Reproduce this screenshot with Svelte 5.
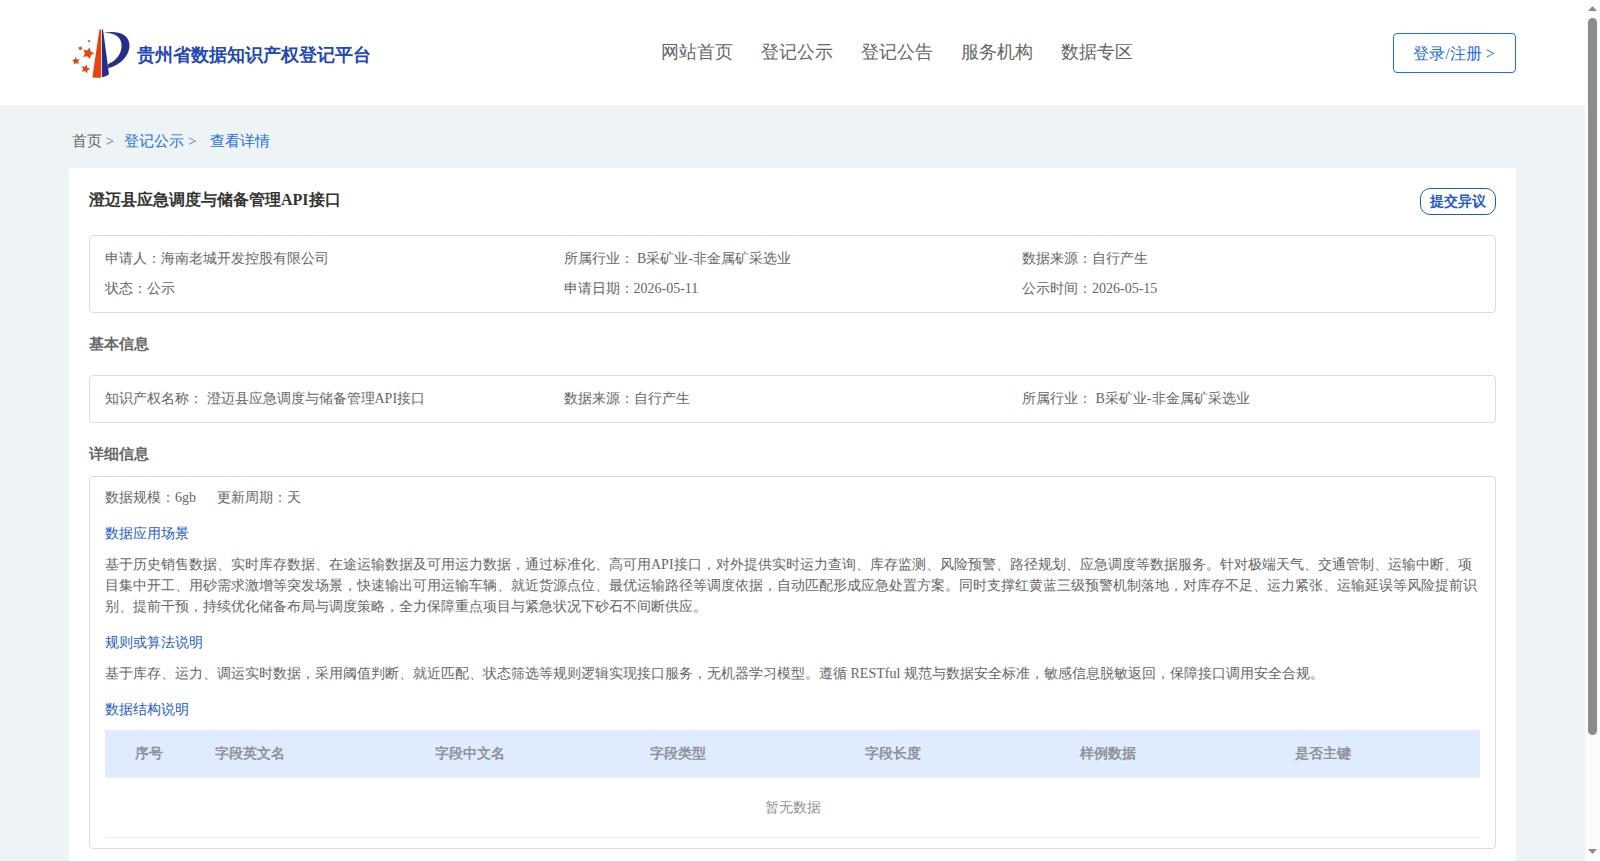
<script>
	const menus = ['网站首页', '登记公示', '登记公告', '服务机构', '数据专区']

	const summary = [
		'申请人：海南老城开发控股有限公司',
		'所属行业： B采矿业-非金属矿采选业',
		'数据来源：自行产生',
		'状态：公示',
		'申请日期：2026-05-11',
		'公示时间：2026-05-15'
	]

	const basic = [
		'知识产权名称： 澄迈县应急调度与储备管理API接口',
		'数据来源：自行产生',
		'所属行业： B采矿业-非金属矿采选业'
	]

	const columns = ['序号', '字段英文名', '字段中文名', '字段类型', '字段长度', '样例数据', '是否主键']
</script>

<div class="window">
	<div class="page">
		<header>
			<div class="logo">
				<svg width="60" height="52" viewBox="0 0 60 52">
					<path d="M27.4 1.4 L29.2 1.4 L29.2 49.4 Q24.5 50.2 20.4 49.2 Z" fill="#e8430f" />
					<path d="M30 1.4 L31 1.4 L37 46.2 Q34 48.6 30 49.2 Z" fill="#282e86" />
					<path d="M31.8 4.8 C44 2 58 5.5 57.5 18 C57 30 45 38.5 36.2 40 L36 36.2 C43.5 33 49.6 26.5 49.6 17.5 C49.6 9 43 4.9 31.8 4.8 Z" fill="#282e86" />
					<g fill="#e8430f">
						<path d="M17.7 19.5 L18.6 23.5 L22.2 25.2 L18.8 27.2 L18.1 31 L15.2 28.3 L11.3 29 L13 25.4 L11.4 21.8 L15.2 22.4 Z" />
						<path d="M3.4 29.1 L5 31.5 L7.8 31.2 L6 33.4 L6.9 36.1 L4.2 35 L1.8 36.6 L2.1 33.7 L0 32 L2.7 31.5 Z" />
						<path d="M14.7 36.5 L15.2 39.7 L18.4 40.7 L15.5 42.2 L15.3 45.4 L12.9 43.1 L9.7 43.7 L11.3 40.9 L9.8 38.2 L12.9 38.7 Z" />
						<path d="M9 18 L9.3 19.6 L10.8 20 L9.4 20.9 L9.2 22.4 L7.9 21.5 L6.4 21.8 L7 20.4 L6.3 18.9 L7.9 19.2 Z" />
						<path d="M17.5 11.9 L18.3 13 L17.6 14.2 L16.2 13.9 L15.9 12.7 Z" />
					</g>
				</svg>
				<span>贵州省数据知识产权登记平台</span>
			</div>
			<nav>
				{#each menus as menu}
					<a href="#top">{menu}</a>
				{/each}
			</nav>
			<button class="login">登录/注册 &gt;</button>
		</header>

		<main>
			<div class="crumbs">
				<span class="home">首页 &gt;</span>
				<span>登记公示 &gt;</span>
				<span>查看详情</span>
			</div>

			<div class="card">
				<div class="title">
					<h1>澄迈县应急调度与储备管理API接口</h1>
					<button class="objection">提交异议</button>
				</div>

				<div class="box grid">
					{#each summary as item}
						<div>{item}</div>
					{/each}
				</div>

				<h2>基本信息</h2>
				<div class="box grid">
					{#each basic as item}
						<div>{item}</div>
					{/each}
				</div>

				<h2 class="tight">详细信息</h2>
				<div class="box detail">
					<div class="scale">
						<span>数据规模：6gb</span>
						<span>更新周期：天</span>
					</div>
					<h3>数据应用场景</h3>
					<p>基于历史销售数据、实时库存数据、在途运输数据及可用运力数据，通过标准化、高可用API接口，对外提供实时运力查询、库存监测、风险预警、路径规划、应急调度等数据服务。针对极端天气、交通管制、运输中断、项目集中开工、用砂需求激增等突发场景，快速输出可用运输车辆、就近货源点位、最优运输路径等调度依据，自动匹配形成应急处置方案。同时支撑红黄蓝三级预警机制落地，对库存不足、运力紧张、运输延误等风险提前识别、提前干预，持续优化储备布局与调度策略，全力保障重点项目与紧急状况下砂石不间断供应。</p>
					<h3>规则或算法说明</h3>
					<p>基于库存、运力、调运实时数据，采用阈值判断、就近匹配、状态筛选等规则逻辑实现接口服务，无机器学习模型。遵循 RESTful 规范与数据安全标准，敏感信息脱敏返回，保障接口调用安全合规。</p>
					<h3>数据结构说明</h3>
					<div class="table">
						<div class="thead">
							{#each columns as column}
								<div>{column}</div>
							{/each}
						</div>
						<div class="empty">暂无数据</div>
					</div>
				</div>
			</div>
		</main>
	</div>

	<div class="scrollbar">
		<svg width="9" height="5" viewBox="0 0 9 5"><path d="M0 5 L4.5 0 L9 5 Z" fill="#8b8b8b" /></svg>
		<div class="thumb"></div>
		<svg class="down" width="9" height="5" viewBox="0 0 9 5"><path d="M0 0 L4.5 5 L9 0 Z" fill="#8b8b8b" /></svg>
	</div>
</div>

<style>
	:global(body) {
		margin: 0;
		overflow: hidden;
	}
	.window {
		display: flex;
		height: 861px;
		overflow: hidden;
		font-family: 'Liberation Serif', serif;
		font-size: 14px;
		color: #666;
	}
	.page {
		flex: 1;
		background: #eef3f6;
	}
	button {
		box-sizing: border-box;
		font-family: inherit;
		background: #fff;
		padding: 0;
		cursor: pointer;
	}
	header {
		box-sizing: border-box;
		display: grid;
		grid-template-columns: 588.5px 1fr 123px;
		align-items: center;
		height: 105px;
		padding: 0 69px 0 72px;
		background: #fff;
	}
	.logo {
		display: flex;
		align-items: center;
		gap: 5px;
		color: #2447b8;
		font-size: 18px;
		font-weight: bold;
		padding-top: 4px;
	}
	.logo svg {
		margin-top: -2px;
	}
	nav {
		display: flex;
		gap: 28px;
		padding-bottom: 2px;
	}
	nav a {
		color: #666;
		font-size: 18px;
		text-decoration: none;
	}
	.login {
		height: 40px;
		padding: 3px 1px 0 0;
		border: 1px solid #1a6df0;
		border-radius: 4px;
		color: #1a6df0;
		font-size: 16px;
	}
	main {
		padding: 0 69px;
	}
	.crumbs {
		display: flex;
		align-items: center;
		box-sizing: border-box;
		height: 63px;
		padding: 10px 3px 0;
		gap: 14px;
		color: #1a6df0;
		font-size: 15px;
	}
	.crumbs .home {
		color: #666;
		margin-right: -4px;
	}
	.card {
		height: 720px;
		padding: 20px;
		background: #fff;
	}
	.title {
		display: flex;
		justify-content: space-between;
		height: 47px;
	}
	h1 {
		margin: 0;
		color: #333;
		font-size: 16px;
		line-height: 24px;
	}
	.objection {
		width: 76px;
		height: 27px;
		border: 1px solid #1c5bcb;
		border-radius: 10px;
		color: #1c5bcb;
		font-size: 14px;
		font-weight: bold;
	}
	.box {
		border: 1px solid #dcdcdc;
		border-radius: 4px;
		padding: 8px 15px;
	}
	.grid {
		display: grid;
		grid-template-columns: 458.5px 458.5px 1fr;
		line-height: 30px;
	}
	h2 {
		margin: 0;
		height: 62px;
		font-size: 15px;
		line-height: 62px;
	}
	h2.tight {
		height: 53px;
	}
	.detail {
		height: 355px;
	}
	.scale {
		display: flex;
		gap: 21px;
		line-height: 26px;
	}
	h3 {
		margin: 13px 0 7px;
		color: #1c5bcb;
		font-size: 14px;
		font-weight: normal;
		line-height: 26px;
	}
	.scale + h3 {
		margin-top: 10px;
	}
	p {
		margin: 0;
		line-height: 21px;
	}
	.table {
		color: #909399;
	}
	.thead {
		display: grid;
		grid-template-columns: 100px 220px repeat(4, 215px) 1fr;
		line-height: 47px;
		border-bottom: 1px solid #ebeef5;
		background: #dfecfe;
		font-weight: bold;
	}
	.thead div {
		padding-left: 10px;
	}
	.thead div:first-child {
		padding-left: 30px;
	}
	.empty {
		line-height: 59px;
		border-bottom: 1px solid #ebeef5;
		text-align: center;
	}
	.scrollbar {
		display: flex;
		flex-direction: column;
		align-items: center;
		box-sizing: border-box;
		width: 15px;
		padding: 6px 0 7px;
		background: #fcfcfc;
	}
	.thumb {
		width: 9px;
		height: 717px;
		margin-top: 7px;
		border-radius: 5px;
		background: #8b8b8b;
	}
	.down {
		margin-top: auto;
	}
</style>
